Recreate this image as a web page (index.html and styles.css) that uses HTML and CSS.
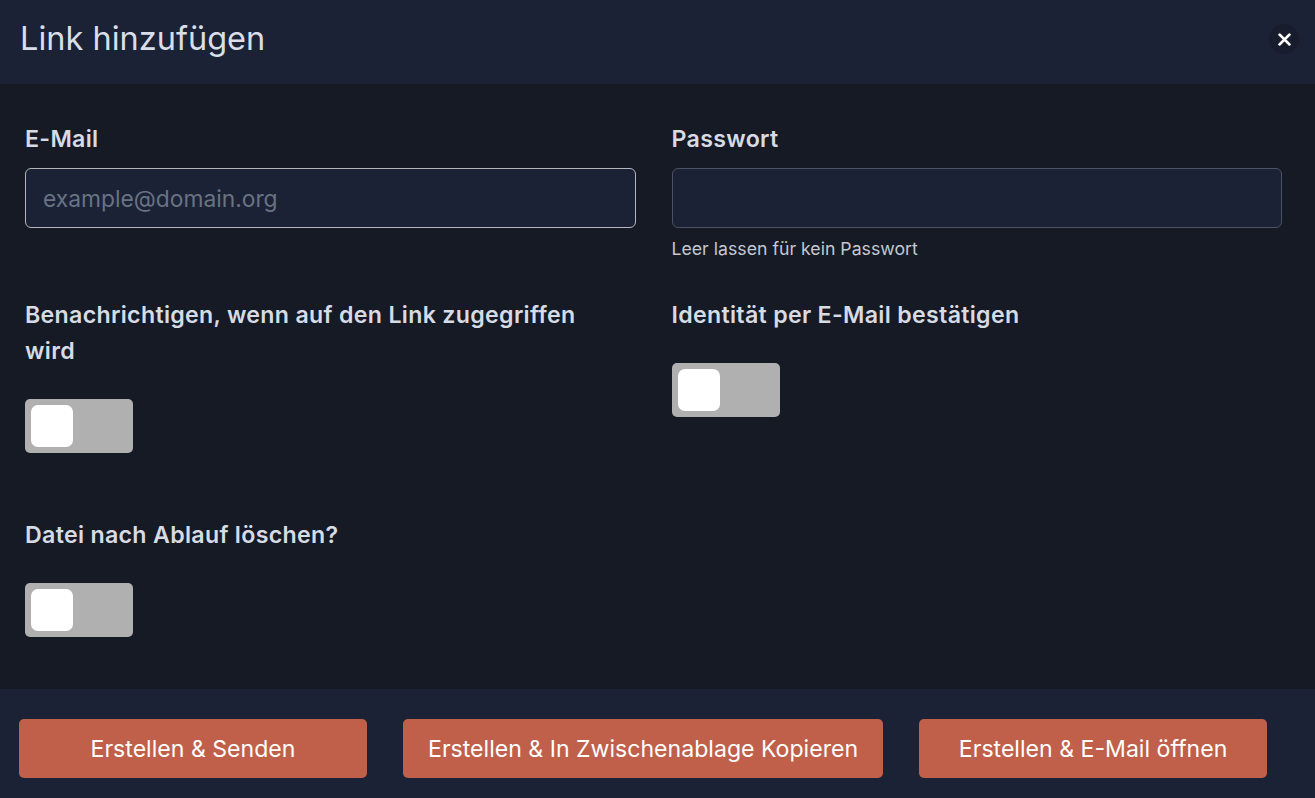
FILE: index.html
```html
<!DOCTYPE html>
<html lang="de">
<head>
  <meta charset="UTF-8">
  <meta name="viewport" content="width=device-width, initial-scale=1.0">
  <title>Link hinzufügen</title>
  <link rel="stylesheet" href="styles.css">
</head>
<body>

  <!-- Modal -->
  <div class="modal">
    <!-- Header -->
    <div class="modal-header">
      <h1 class="modal-title">Link hinzufügen</h1>
      <button class="close-btn" aria-label="Schließen">
        <svg width="13" height="13" viewBox="0 0 12 12">
          <path d="M1.5 1.5 L10.5 10.5 M10.5 1.5 L1.5 10.5" stroke="#fff" stroke-width="2.6" stroke-linecap="round"/>
        </svg>
      </button>
    </div>

    <!-- Form -->
    <div class="modal-body">
      <div class="field">
        <label class="field-label">E-Mail</label>
        <input class="text-input focused" type="email" placeholder="example@domain.org">
      </div>

      <div class="field">
        <label class="field-label">Passwort</label>
        <input class="text-input" type="password">
        <div class="field-help">Leer lassen für kein Passwort</div>
      </div>

      <div class="field toggle-field">
        <label class="field-label">Benachrichtigen, wenn auf den Link zugegriffen wird</label>
        <div class="toggle"><span class="toggle-knob"></span></div>
      </div>

      <div class="field toggle-field">
        <label class="field-label">Identität per E-Mail bestätigen</label>
        <div class="toggle"><span class="toggle-knob"></span></div>
      </div>

      <div class="field toggle-field">
        <label class="field-label">Datei nach Ablauf löschen?</label>
        <div class="toggle"><span class="toggle-knob"></span></div>
      </div>
    </div>

    <!-- Footer -->
    <div class="modal-footer">
      <button class="action-btn">Erstellen &amp; Senden</button>
      <button class="action-btn">Erstellen &amp; In Zwischenablage Kopieren</button>
      <button class="action-btn">Erstellen &amp; E-Mail öffnen</button>
    </div>
  </div>

</body>
</html>
```

FILE: styles.css
```css
/* Reset */
* {
  margin: 0;
  padding: 0;
  box-sizing: border-box;
  font-family: Inter, 'Noto Sans', sans-serif;
}

body {
  background: #151a25;
  width: 1315px;
  height: 798px;
  overflow: hidden;
}

.modal {
  display: flex;
  flex-direction: column;
  height: 798px;
}

/* Header */
.modal-header {
  height: 84px;
  background: #1b2235;
  display: flex;
  align-items: center;
  justify-content: space-between;
  padding: 0 16px 8px 20px;
}

.modal-title {
  font-size: 32.5px;
  font-weight: 400;
  color: #d9dee8;
}

.close-btn {
  width: 30px;
  height: 30px;
  border-radius: 50%;
  border: none;
  background: #171d2c;
  display: flex;
  align-items: center;
  justify-content: center;
  margin-top: 2px;
}

/* Body */
.modal-body {
  flex: 1;
  background: #151a25;
  padding: 37px 33px 0 25px;
  display: grid;
  grid-template-columns: 1fr 1fr;
  column-gap: 36px;
  row-gap: 36px;
  align-content: start;
}

.field-label {
  display: block;
  font-size: 23.2px;
  font-weight: 600;
  line-height: 36px;
  letter-spacing: 0.3px;
  color: #d6dbe4;
  margin-bottom: 11px;
  padding-right: 20px;
}

.text-input {
  display: block;
  width: 100%;
  height: 60px;
  background: #1b2235;
  border: 1px solid #4b5263;
  border-radius: 6px;
  padding: 0 17px;
  font-size: 22.8px;
  color: #d6dbe4;
  outline: none;
}

.text-input.focused {
  border-color: #b4b6bb;
}

.text-input::placeholder {
  color: #687384;
}

.field-help {
  font-size: 17.7px;
  line-height: 24px;
  color: #c3c8d1;
  margin-top: 9px;
}

/* Toggles */
.toggle-field .field-label {
  margin-bottom: 30px;
}

.toggle-field:nth-child(5) {
  margin-top: 28px;
}

.toggle {
  width: 108px;
  height: 54px;
  background: #b0b0b0;
  border-radius: 5px;
  padding: 6px;
}

.toggle-knob {
  display: block;
  width: 42px;
  height: 42px;
  background: #ffffff;
  border-radius: 7px;
}

/* Footer */
.modal-footer {
  height: 109px;
  background: #1b2235;
  display: flex;
  gap: 36px;
  padding: 30px 19px 20px;
}

.action-btn {
  min-width: 348px;
  height: 59px;
  padding: 0 25px;
  background: #c0604a;
  color: #ffffff;
  border: none;
  border-radius: 5px;
  font-size: 23.1px;
  font-weight: 400;
}
```
